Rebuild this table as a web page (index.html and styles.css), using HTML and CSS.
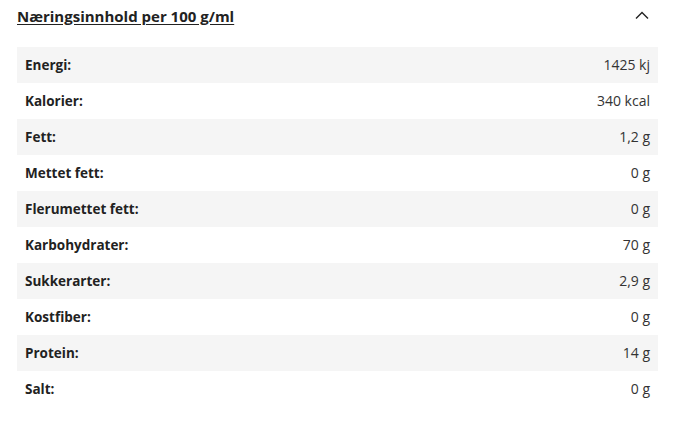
FILE: index.html
```html
<!DOCTYPE html>
<html lang="no">
<head>
<meta charset="utf-8">
<link rel="stylesheet" href="styles.css">
</head>
<body>
<section class="panel">
  <div class="head">
    <h3 class="title">Næringsinnhold per 100 g/ml</h3>
    <svg class="chev" width="14" height="8" viewBox="0 0 14 8"><path d="M1 7.5 L7 1.5 L13 7.5" fill="none" stroke="#222" stroke-width="1.4"/></svg>
  </div>
  <table class="tbl">
    <tr><th>Energi:</th><td>1425 kj</td></tr>
    <tr><th>Kalorier:</th><td>340 kcal</td></tr>
    <tr><th>Fett:</th><td>1,2 g</td></tr>
    <tr><th>Mettet fett:</th><td>0 g</td></tr>
    <tr><th>Flerumettet fett:</th><td>0 g</td></tr>
    <tr><th>Karbohydrater:</th><td>70 g</td></tr>
    <tr><th>Sukkerarter:</th><td>2,9 g</td></tr>
    <tr><th>Kostfiber:</th><td>0 g</td></tr>
    <tr><th>Protein:</th><td>14 g</td></tr>
    <tr><th>Salt:</th><td>0 g</td></tr>
  </table>
</section>
</body>
</html>
```
FILE: styles.css
```css
html, body { margin: 0; padding: 0; background: #fff; }
body { font-family: "Open Sans", Lato, sans-serif; color: #222; }
.panel { padding: 0 22px 0 17px; }
.head { display: flex; justify-content: space-between; align-items: center; height: 31px; margin-bottom: 16px; }
.title { margin: 0; font-size: 15px; font-weight: 700; text-decoration: underline; text-underline-offset: 2px; color: #222; }
.chev { margin-right: 9px; margin-top: -2px; }
.tbl { width: 100%; border-collapse: collapse; font-size: 13.5px; }
.tbl tr { height: 36px; }
.tbl tr:nth-child(odd) { background: #f5f5f5; }
.tbl th { text-align: left; font-weight: 700; padding: 0 8px 1px; color: #222; }
.tbl td { text-align: right; padding: 0 8px 1px; color: #333; font-size: 14px; }
```
